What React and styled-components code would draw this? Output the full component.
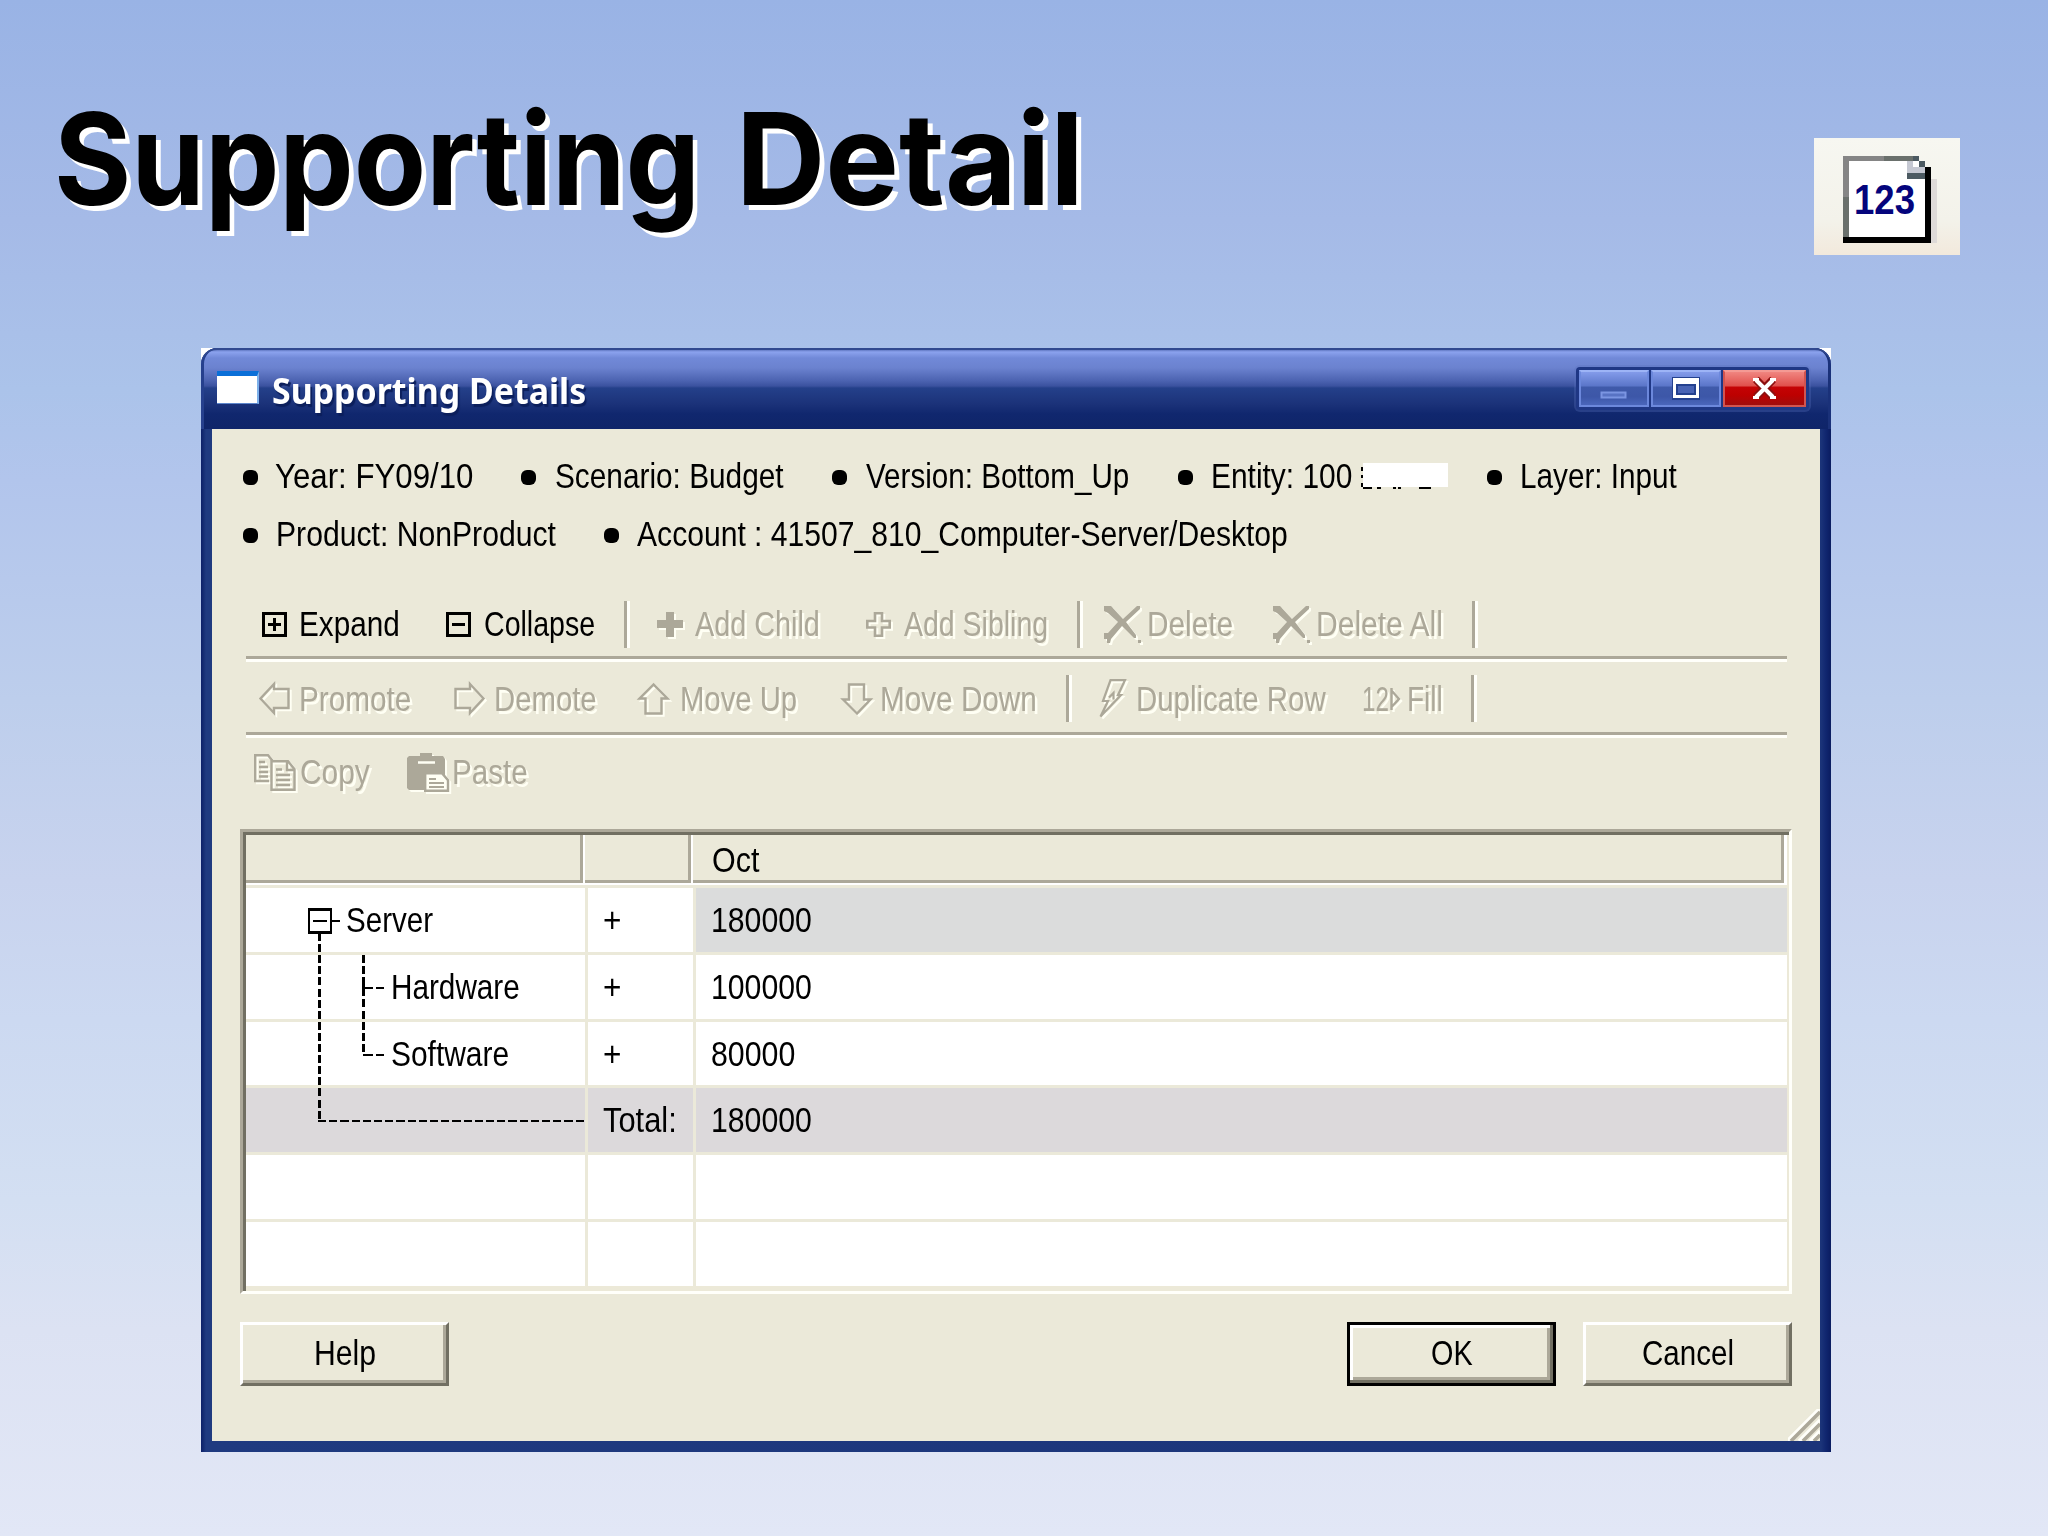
// src/App.jsx
import React, { useLayoutEffect, useRef, useState } from 'react';
import styled, { createGlobalStyle, css } from 'styled-components';

const GlobalStyle = createGlobalStyle`
  * {
    box-sizing: border-box;
  }

  body {
    margin: 0;
    font-family: "Liberation Sans", Arial, sans-serif;
  }
`;

const Slide = styled.main`
  width: 2048px;
  height: 1536px;
  overflow: hidden;
  background: linear-gradient(
    180deg,
    #99b3e5 0,
    #a5bae7 220px,
    #abc3ea 390px,
    #b2c5ec 480px,
    #bdceec 700px,
    #c8d3ee 880px,
    #ccd9f1 1020px,
    #d3dff2 1200px,
    #dce2f3 1330px,
    #e2e7f6 1536px
  );
`;

const SlideHeader = styled.header`
  display: flex;
  justify-content: space-between;
  align-items: flex-start;
  height: 348px;
  padding: 0 88px 0 54px;
`;

const Title = styled.h1`
  display: flex;
  gap: 36px;
  margin: 76px 0 0;
  font-family: Inter, "Open Sans", sans-serif;
  font-size: 128px;
  font-weight: 700;
  line-height: 166px;
  color: #000;
  text-shadow: 5px 5px 0 #fff;
`;

const DocBadge = styled.div`
  width: 146px;
  height: 117px;
  margin-top: 138px;
  background: linear-gradient(180deg, #f7f7f1 0%, #f3f2ea 70%, #f2e9dc 100%);

  svg {
    display: block;
  }
`;

const FitBox = styled.span`
  display: block;
  flex: none;
  width: ${props => props.$width}px;
  white-space: nowrap;

  > span {
    display: inline-block;
    transform-origin: 0 50%;
  }
`;

const Window = styled.section`
  width: 1630px;
  height: 1104px;
  margin-left: 201px;
  background: #fff;
`;

const WindowFrame = styled.div`
  height: 100%;
  display: flex;
  flex-direction: column;
  border-radius: 16px 16px 0 0;
  background: linear-gradient(90deg, #0c2068 0, #1f3a80 5px, #1b3479 1620px, #10266f 1625px, #0a1c60 100%);
  overflow: hidden;
`;

const TitleBar = styled.div`
  display: flex;
  align-items: flex-start;
  height: 81px;
  padding: 0 22px 0 16px;
  border-radius: 16px 16px 0 0;
  box-shadow: inset 0 2px 0 #31498f, inset 3px 0 0 #26408d, inset -3px 0 0 #1a3179;
  background: linear-gradient(
    180deg,
    #3a5199 0,
    #8ba2ee 4px,
    #7189d8 10px,
    #6b82cf 20px,
    #4b62b0 33px,
    #3b529f 38px,
    #24408a 40px,
    #1b3279 56px,
    #10276e 66px,
    #0f2569 81px
  );
`;

const AppIcon = styled.div`
  width: 42px;
  height: 33px;
  margin: 23px 13px 0 0;
  border-top: 5px solid #0a6fd8;
  border-right: 2px solid #7cb0ea;
  border-bottom: 1px solid #5d86cc;
  background: #fff;
`;

const WindowTitle = styled.h2`
  margin: 18px auto 0 0;
  font-family: "Noto Sans", "Open Sans", sans-serif;
  font-size: 35.5px;
  font-weight: 700;
  line-height: 48px;
  color: #fff;
  text-shadow: 2px 3px 1px #0c1f5c;
`;

const WindowControls = styled.div`
  display: flex;
  gap: 2px;
  margin-top: 19px;
  padding: 3px;
  border-radius: 4px;
  background: #1f3785;
  box-shadow: 0 0 0 2px rgba(88, 114, 190, 0.3);
`;

const ControlButton = styled.button`
  display: flex;
  align-items: center;
  justify-content: center;
  width: ${props => (props.$danger ? 83 : 70)}px;
  height: 37px;
  padding: 0;
  border: 2px solid #6c88dc;
  border-top-color: #9db4f6;
  background: linear-gradient(180deg, #839bea 0%, #5b76c9 42%, #3f5aaa 46%, #3d57a8 75%, #4a66bb 100%);

  ${props => props.$danger && css`
    border-color: #d2544f;
    border-top-color: #f49a94;
    background: linear-gradient(180deg, #f08580 0%, #e0504c 42%, #c40305 46%, #bd0000 70%, #a00c0c 100%);
  `}
`;

const Body = styled.div`
  position: relative;
  flex: 1;
  margin: 0 11px 11px;
  padding: 18px 28px 0;
  background: #ebe9d9;
  color: #000;
  font-size: 35px;
  line-height: 40px;
`;

const FactLists = styled.div`
  margin-bottom: 26px;
`;

const Facts = styled.ul`
  display: grid;
  grid-template-columns: ${props => props.$columns};
  margin: 0 0 0 3px;
  padding: 0;
  list-style: none;
`;

const Fact = styled.li`
  display: flex;
  align-items: center;
  height: 58px;

  &::before {
    content: "";
    flex: none;
    width: 15px;
    height: 15px;
    margin: 3px ${props => props.$gap - 15}px 0 0;
    border-radius: 6px;
    background: #000;
  }
`;

const Redaction = styled.svg`
  flex: none;
  margin-left: 9px;
`;

const Toolbar = styled.div`
  display: flex;
  align-items: center;
  height: ${props => props.$height}px;
  margin-left: 6px;
  padding-left: ${props => props.$inset}px;
  width: 1541px;

  ${props => props.$ruled && css`
    border-bottom: 3px solid #fffffa;
    box-shadow: inset 0 -3px 0 #aca899;
  `}
`;

const Tool = styled.button`
  display: flex;
  align-items: center;
  flex: none;
  margin: 0 ${props => props.$after}px 0 0;
  padding: 0;
  border: 0;
  background: none;
  font: inherit;
  text-align: left;
  color: #000;

  svg {
    flex: none;
    overflow: visible;
    margin-right: ${props => props.$gap}px;
  }

  &:disabled {
    color: #aca899;
    text-shadow: 3px 3px 0 #fffff4;
  }

  &:disabled svg {
    filter: drop-shadow(2.5px 2.5px 0 #fffff4);
  }
`;

const Separator = styled.span`
  flex: none;
  width: 6px;
  height: 47px;
  margin-right: ${props => props.$after}px;
  border-left: 3px solid #aca899;
  border-right: 3px solid #fffffa;
`;

const Grid = styled.div`
  position: relative;
  height: 465px;
  margin: 23px 0 28px;
  border: 3px solid;
  border-color: #aca899 #fffffa #fffffa #aca899;
  background: #fff;
  box-shadow: inset 3px 3px 0 #716f62, inset -2px -5px 0 #ece9d8;
  padding: 3px 2px 5px 3px;
`;

const GridColumns = css`
  display: grid;
  grid-template-columns: 339px 108px 1fr;
`;

const GridHead = styled.div`
  ${GridColumns}
  height: 50px;
  padding-bottom: 5px;
`;

const HeadCell = styled.div`
  display: flex;
  align-items: center;
  margin-right: ${props => (props.$last ? 3 : 2)}px;
  padding: 5px 0 0 ${props => (props.$last ? 19 : 16)}px;
  border-right: 3px solid #aca899;
  border-bottom: 3px solid #aca899;
  background: #ebe9d9;
`;

const GridBody = styled.div`
  display: flex;
  flex-direction: column;
  height: 401px;
`;

const Row = styled.div`
  ${GridColumns}
  flex: 1;
  background: ${props => (props.$total ? '#dcd9db' : '#fff')};
`;

const Cell = styled.div`
  display: flex;
  align-items: center;
  padding-left: ${props => props.$indent}px;
  border-top: 3px solid #ebe9d9;
  border-left: ${props => (props.$first ? 'none' : '3px solid #ebe9d9')};
  background: ${props => (props.$selected ? '#dbdcdc' : 'transparent')};
`;

const TreeLines = styled.svg`
  position: absolute;
  left: 3px;
  top: 53px;
`;

const Actions = styled.div`
  display: flex;
  gap: 27px;
`;

const PushButton = styled.button`
  display: flex;
  align-items: center;
  justify-content: center;
  width: 209px;
  height: 64px;
  margin: 0 ${props => (props.$pushRight ? 'auto' : 0)} 0 0;
  padding: 0 0 3px;
  border: 3px solid;
  border-color: #fff #716f62 #716f62 #fff;
  box-shadow: inset -3px -3px 0 #aca899;
  background: #ebe9d9;
  font: inherit;
  text-align: left;
  color: #000;

  ${props => props.$default && css`
    border-color: #000;
    box-shadow: inset -3px -3px 0 #716f62, inset 3px 3px 0 #fff, inset -6px -6px 0 #aca899;
  `}
`;

const ResizeGrip = styled.svg`
  position: absolute;
  right: 0;
  bottom: 0;
`;

const FitText = ({ width, children }) => {
  const ref = useRef(null);
  const [scale, setScale] = useState(1);

  useLayoutEffect(() => {
    setScale(width / ref.current.offsetWidth);
  }, [width, children]);

  return (
    <FitBox $width={width}>
      <span ref={ref} style={{ transform: `scaleX(${scale})` }}>{children}</span>
    </FitBox>
  );
};

const line = { fill: 'none', stroke: 'currentColor', strokeWidth: 2.6 };

const icons = {
  expand: (
    <svg width="25" height="25" {...line} shapeRendering="crispEdges">
      <path d="M1.5 1.5h22v22h-22zM6 12.5h13M12.5 6v13" />
    </svg>
  ),
  collapse: (
    <svg width="25" height="25" {...line} shapeRendering="crispEdges">
      <path d="M1.5 1.5h22v22h-22zM6 12.5h13" />
    </svg>
  ),
  child: (
    <svg width="26" height="25" fill="currentColor">
      <path d="M9 0h8v8h9v8h-9v9H9v-9H0V8h9z" />
    </svg>
  ),
  sibling: (
    <svg width="25" height="25" {...line}>
      <path d="M9 1.3h7V9h7.7v6.5H16v8.2H9v-8.2H1.3V9H9z" />
    </svg>
  ),
  remove: (
    <svg width="37" height="37" fill="currentColor">
      <path d="M0 0h7l12 13L33 0h3v3L22 16l10 13v3h-2L18 20 7 33l-1 4H3v-4H0v-6h4l10-11L4 7 0 5z" />
      <path d="M34 34h3v3h-3z" />
    </svg>
  ),
  left: (
    <svg width="31" height="33" {...line} strokeWidth="2.4">
      <path d="M15 2v5h14.5v19H15v5L1.5 16.5z" />
    </svg>
  ),
  right: (
    <svg width="31" height="33" {...line} strokeWidth="2.4">
      <path d="M16 2v5H1.5v19H16v5l13.5-14.5z" />
    </svg>
  ),
  up: (
    <svg width="33" height="32" {...line} strokeWidth="2.4">
      <path d="M16.5 1.5 2.5 15.5h6v15h16v-15h6z" />
    </svg>
  ),
  down: (
    <svg width="32" height="32" {...line} strokeWidth="2.4">
      <path d="M16 30.5 2 16.5h6v-15h15v15h6.5z" />
    </svg>
  ),
  bolt: (
    <svg width="28" height="40" {...line} strokeWidth="2.2">
      <path d="M11.5 1.2H26L19 16h3L1.5 37.5 9 22H4z" />
      <path d="M10 18.5 14.5 14v6.5" />
    </svg>
  ),
  copy: (
    <svg width="42" height="37" {...line} strokeWidth="2.4">
      <path d="M15 27H1.2V1.2H14l5 6M5 8h6M5 13h9M5 18h9M5 22.5h9" />
      <path d="M17.5 7.2H34l6.5 8v20.6h-23zM22 15.5h6M22 21h14M22 26h14M22 31h14M33 8v8h7" />
    </svg>
  ),
  paste: (
    <svg width="42" height="39">
      <path d="M2 3h11V0h12v3h11l2 3v31H2l-2-2V5z" fill="currentColor" />
      <path d="M11 9.5h17" stroke="#fffff4" strokeWidth="2.5" />
      <path d="M18.2 20.2H35l6 7v10.6H18.2z" fill="#fffff4" stroke="currentColor" strokeWidth="2.4" />
      <path d="M22 26h7M22 30h15M22 34h15" stroke="currentColor" strokeWidth="2" />
    </svg>
  ),
};

const NumberFillIcon = () => (
  <>
    <FitText width={27}>12</FitText>
    <svg width="12" height="24" {...line} strokeWidth="2.4">
      <path d="M2.5 1v22M2.5 3.5l7.5 8.5-7.5 8" />
    </svg>
  </>
);

const facts = [
  {
    columns: '278px 311px 345.5px 309px auto',
    items: [
      { label: 'Year: FY09/10', gap: 32, width: 198 },
      { label: 'Scenario: Budget', gap: 34, width: 229 },
      { label: 'Version: Bottom_Up', gap: 34, width: 263 },
      { label: 'Entity: 100', gap: 33, width: 141, redacted: true },
      { label: 'Layer: Input', gap: 33, width: 157 },
    ],
  },
  {
    columns: '361px auto',
    items: [
      { label: 'Product: NonProduct', gap: 33, width: 280 },
      { label: 'Account : 41507_810_Computer-Server/Desktop', gap: 33, width: 651 },
    ],
  },
];

const toolbars = [
  {
    height: 73,
    inset: 16,
    ruled: true,
    items: [
      { label: 'Expand', icon: icons.expand, gap: 12, width: 101, after: 46, enabled: true },
      { label: 'Collapse', icon: icons.collapse, gap: 13, width: 111, after: 29, enabled: true },
      { separator: true, after: 27 },
      { label: 'Add Child', icon: icons.child, gap: 12, width: 125, after: 46 },
      { label: 'Add Sibling', icon: icons.sibling, gap: 13, width: 144, after: 29 },
      { separator: true, after: 21 },
      { label: 'Delete', icon: icons.remove, gap: 6, width: 86, after: 40 },
      { label: 'Delete All', icon: icons.remove, gap: 6, width: 127, after: 29 },
      { separator: true, after: 0 },
    ],
  },
  {
    height: 76,
    inset: 13,
    ruled: true,
    items: [
      { label: 'Promote', icon: icons.left, gap: 9, width: 112, after: 43 },
      { label: 'Demote', icon: icons.right, gap: 9, width: 103, after: 40 },
      { label: 'Move Up', icon: icons.up, gap: 10, width: 117, after: 44 },
      { label: 'Move Down', icon: icons.down, gap: 7, width: 157, after: 29 },
      { separator: true, after: 27 },
      { label: 'Duplicate Row', icon: icons.bolt, gap: 9, width: 190, after: 36 },
      { label: 'Fill', icon: <NumberFillIcon />, gap: 6, width: 36, after: 28 },
      { separator: true, after: 0 },
    ],
  },
  {
    height: 68,
    inset: 8,
    items: [
      { label: 'Copy', icon: icons.copy, gap: 4, width: 70, after: 37 },
      { label: 'Paste', icon: icons.paste, gap: 3, width: 76, after: 0 },
    ],
  },
];

const rows = [
  { name: 'Server', indent: 100, width: 87, sign: '+', signWidth: 18, value: '180000', valueWidth: 101, selected: true },
  { name: 'Hardware', indent: 145, width: 129, sign: '+', signWidth: 18, value: '100000', valueWidth: 101 },
  { name: 'Software', indent: 145, width: 118, sign: '+', signWidth: 18, value: '80000', valueWidth: 84 },
  { sign: 'Total:', signWidth: 74, value: '180000', valueWidth: 101, total: true },
  {},
  {},
];

const App = () => (
  <>
    <GlobalStyle />
    <Slide>
      <SlideHeader>
        <Title>
          <FitText width={646}>Supporting</FitText>
          <FitText width={348}>Detail</FitText>
        </Title>
        <DocBadge>
          <svg width="146" height="117" shapeRendering="crispEdges">
            <g transform="scale(5.84 5.85)">
              <path d="M6 18h15V7h-1v11z" fill="#dedad8" />
              <path d="M5 3h13v15H5z" fill="#6a706c" />
              <path d="M5 3h7v1H6v6H5z" fill="#858585" />
              <path d="M6 4h13v13H6z" fill="#fff" />
              <path d="M5 17h14V5h1v13H5z" fill="#000" />
              <path d="M16 4h3v3h-3z" fill="#c5c8d2" />
              <path d="M17 4h1v1h-1z" fill="#fff" />
              <path d="M17 3h1v1h1v1h-1V4h-1zM16 6h3v1h-3z" fill="#4c5a62" />
            </g>
            <text
              x="40"
              y="76"
              textLength="61"
              lengthAdjust="spacingAndGlyphs"
              fontFamily="Liberation Sans, sans-serif"
              fontWeight="700"
              fontSize="42"
              fill="#04047c"
            >
              123
            </text>
          </svg>
        </DocBadge>
      </SlideHeader>

      <Window>
        <WindowFrame>
          <TitleBar>
            <AppIcon />
            <WindowTitle>
              <FitText width={314}>Supporting Details</FitText>
            </WindowTitle>
            <WindowControls>
              <ControlButton aria-label="Minimize">
                <svg width="66" height="33">
                  <path d="M20.5 20.5h24v5h-24z" fill="#5873c4" stroke="#7b95e2" strokeWidth="2" />
                </svg>
              </ControlButton>
              <ControlButton aria-label="Maximize">
                <svg width="66" height="33" shapeRendering="crispEdges">
                  <path d="M19 5h28v23H19z" fill="#24418f" />
                  <path d="M20 6h26v20H20zM23 12v11h20V12z" fill="#fff" fillRule="evenodd" />
                  <path d="M25 14h16v7H25z" fill="#4863b4" />
                </svg>
              </ControlButton>
              <ControlButton $danger aria-label="Close">
                <svg width="79" height="33" fill="none">
                  <path d="M31 7.5 48 25M48 7.5 31 25" stroke="#8c1010" strokeWidth="8" />
                  <path d="M31 8 48 25M48 8 31 25" stroke="#fff" strokeWidth="4" />
                  <path d="M28 7.5h6M45 7.5h6M28 25.5h6M45 25.5h6" stroke="#fff" strokeWidth="3" />
                </svg>
              </ControlButton>
            </WindowControls>
          </TitleBar>

          <Body>
            <FactLists>
              {facts.map((group, i) => (
                <Facts key={i} $columns={group.columns}>
                  {group.items.map(fact => (
                    <Fact key={fact.label} $gap={fact.gap}>
                      <FitText width={fact.width}>{fact.label}</FitText>
                      {fact.redacted && (
                        <Redaction width="87" height="26" shapeRendering="crispEdges">
                          <path d="M0 4h2v4H0zM0 12h2v3H0zM0 20h2v4H0zM2 23h9v3H2zM16 23h4v3h-4zM32 23h3v3h-3zM37 23h3v3h-3zM58 23h12v3H58z" />
                          <path d="M2 0h85v24H2z" fill="#fff" />
                        </Redaction>
                      )}
                    </Fact>
                  ))}
                </Facts>
              ))}
            </FactLists>

            {toolbars.map((bar, i) => (
              <Toolbar key={i} $height={bar.height} $inset={bar.inset} $ruled={bar.ruled}>
                {bar.items.map((item, j) => (
                  item.separator ? (
                    <Separator key={j} $after={item.after} />
                  ) : (
                    <Tool key={j} disabled={!item.enabled} $gap={item.gap} $after={item.after}>
                      {item.icon}
                      <FitText width={item.width}>{item.label}</FitText>
                    </Tool>
                  )
                ))}
              </Toolbar>
            ))}

            <Grid>
              <GridHead>
                <HeadCell />
                <HeadCell />
                <HeadCell $last>
                  <FitText width={47}>Oct</FitText>
                </HeadCell>
              </GridHead>
              <GridBody>
                {rows.map((row, i) => (
                  <Row key={i} $total={row.total}>
                    <Cell $first $indent={row.indent || 0}>
                      {row.name && <FitText width={row.width}>{row.name}</FitText>}
                    </Cell>
                    <Cell $indent={15}>
                      {row.sign && <FitText width={row.signWidth}>{row.sign}</FitText>}
                    </Cell>
                    <Cell $indent={15} $selected={row.selected}>
                      {row.value && <FitText width={row.valueWidth}>{row.value}</FitText>}
                    </Cell>
                  </Row>
                ))}
              </GridBody>
              <TreeLines width="339" height="260" fill="none" stroke="#000" shapeRendering="crispEdges">
                <path d="M63 24.5h22v23H63zM67 36h14M86 36h8" strokeWidth="2.6" />
                <path d="M73.5 48v188" strokeWidth="2.6" strokeDasharray="8 3.1" />
                <path d="M72 236h267" strokeWidth="2.6" strokeDasharray="8.2 3" />
                <path d="M117.5 70v100" strokeWidth="2.6" strokeDasharray="8 3.1" />
                <path d="M117.5 97v12" strokeWidth="2.6" />
                <path d="M117 103h21M117 170h21" strokeWidth="2.6" strokeDasharray="10 3 8" />
              </TreeLines>
            </Grid>

            <Actions>
              <PushButton $pushRight>
                <FitText width={62}>Help</FitText>
              </PushButton>
              <PushButton $default>
                <FitText width={42}>OK</FitText>
              </PushButton>
              <PushButton>
                <FitText width={92}>Cancel</FitText>
              </PushButton>
            </Actions>

            <ResizeGrip width="32" height="32" strokeWidth="3.2">
              <path d="M-1 32 32-1M11 32l21-21M22 32l10-10" stroke="#fffffa" />
              <path d="M3 32 32 3M15 32l17-17M26 32l6-6" stroke="#aca899" strokeWidth="3.6" />
            </ResizeGrip>
          </Body>
        </WindowFrame>
      </Window>
    </Slide>
  </>
);

export default App;
